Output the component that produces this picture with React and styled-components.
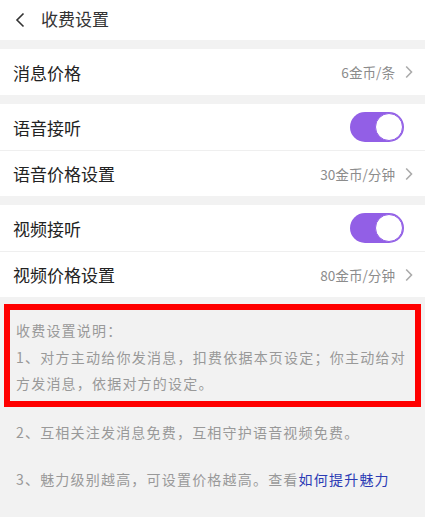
import React, { useState } from 'react';
import styled, { createGlobalStyle } from 'styled-components';

const GlobalStyle = createGlobalStyle`
  * { box-sizing: border-box; }
  body {
    margin: 0;
    background: #f2f2f2;
    font-family: "PingFang SC", "Noto Sans CJK SC", "Noto Sans", sans-serif;
    -webkit-font-smoothing: antialiased;
  }
`;

const Page = styled.div`
  width: 425px;
  min-height: 517px;
  background: #f2f2f2;
  display: flex;
  flex-direction: column;
`;

const Header = styled.div`
  height: 40px;
  background: #fff;
  display: flex;
  align-items: center;
  padding-left: 15px;
  gap: 16px;
  margin-bottom: 9px;
`;

const Title = styled.div`
  font-size: 17px;
  color: #333;
  line-height: 1;
  padding-bottom: 4px;
`;

const Group = styled.div`
  background: #fff;
  margin-bottom: ${p => (p.$last ? '0' : '9px')};
`;

const Row = styled.div`
  height: 46px;
  display: flex;
  align-items: center;
  justify-content: space-between;
  padding: 0 12px 0 13px;
  border-top: ${p => (p.$divider ? '1px solid #efefef' : 'none')};
`;

const Label = styled.span`
  font-size: 17px;
  color: #222;
`;

const Value = styled.span`
  display: flex;
  align-items: center;
  gap: 10px;
  font-size: 13.6px;
  color: #8c8c8c;
`;

const Toggle = styled.button`
  width: 54px;
  height: 30px;
  border: none;
  border-radius: 15px;
  padding: 0;
  margin-right: 9px;
  background: ${p => (p.$on ? '#925fe6' : '#e5e5e5')};
  display: flex;
  align-items: center;
  justify-content: ${p => (p.$on ? 'flex-end' : 'flex-start')};
  cursor: pointer;
`;

const Knob = styled.span`
  width: 28px;
  height: 28px;
  margin: 0 1px;
  border-radius: 50%;
  background: #fff;
  border: 1.5px solid #925fe6;
`;

const Notes = styled.div`
  padding: 7px 0 20px;
  color: #999;
  font-size: 14px;
  letter-spacing: 1.2px;
  line-height: 26.5px;
`;

const Highlight = styled.div`
  margin: 0 4px;
  border: 6px solid #ff0000;
  padding: 7px 9px 4px 6px;
  text-align: justify;
`;

const Note = styled.p`
  margin: ${p => (p.$first ? '12px' : '21px')} 0 0;
  padding: 0 27px 0 16px;
  text-align: justify;
`;

const Link = styled.a`
  color: #2b3bb5;
  text-decoration: none;
`;

const Back = () => (
  <svg width="10" height="16" viewBox="0 0 10 16">
    <path d="M8.5 1.5 L2 8 L8.5 14.5" fill="none" stroke="#333" strokeWidth="1.6" />
  </svg>
);

const Chevron = () => (
  <svg width="8" height="14" viewBox="0 0 8 14">
    <path d="M1.2 1.5 L6.5 7 L1.2 12.5" fill="none" stroke="#ababab" strokeWidth="1.6" />
  </svg>
);

function Switch({ on, onClick }) {
  return (
    <Toggle $on={on} onClick={onClick}>
      <Knob />
    </Toggle>
  );
}

export default function App() {
  const [voice, setVoice] = useState(true);
  const [video, setVideo] = useState(true);

  return (
    <Page>
      <GlobalStyle />
      <Header>
        <Back />
        <Title>收费设置</Title>
      </Header>

      <Group>
        <Row>
          <Label>消息价格</Label>
          <Value>6金币/条<Chevron /></Value>
        </Row>
      </Group>

      <Group>
        <Row>
          <Label>语音接听</Label>
          <Switch on={voice} onClick={() => setVoice(!voice)} />
        </Row>
        <Row $divider>
          <Label>语音价格设置</Label>
          <Value>30金币/分钟<Chevron /></Value>
        </Row>
      </Group>

      <Group $last>
        <Row>
          <Label>视频接听</Label>
          <Switch on={video} onClick={() => setVideo(!video)} />
        </Row>
        <Row $divider>
          <Label>视频价格设置</Label>
          <Value>80金币/分钟<Chevron /></Value>
        </Row>
      </Group>

      <Notes>
        <Highlight>
          收费设置说明：<br />
          1、对方主动给你发消息，扣费依据本页设定；你主动给对方发消息，依据对方的设定。
        </Highlight>
        <Note $first>2、互相关注发消息免费，互相守护语音视频免费。</Note>
        <Note>3、魅力级别越高，可设置价格越高。查看<Link href="#">如何提升魅力</Link></Note>
      </Notes>
    </Page>
  );
}
